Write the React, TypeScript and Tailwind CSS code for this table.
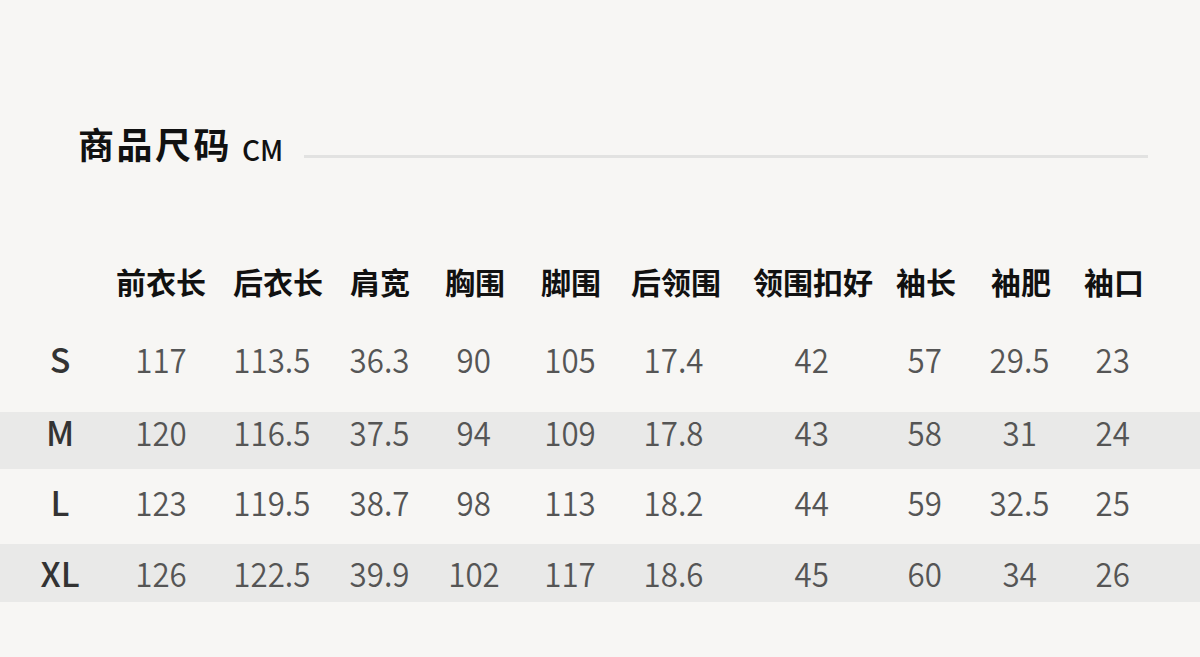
import React from "react";

const font = { fontFamily: '"Noto Sans CJK SC", "Noto Sans", sans-serif' };

const headers = ["前衣长", "后衣长", "肩宽", "胸围", "脚围", "后领围", "领围扣好", "袖长", "袖肥", "袖口"];

const rows: { size: string; vals: string[]; band: boolean; h: string; pt: string }[] = [
  { size: "S", vals: ["117", "113.5", "36.3", "90", "105", "17.4", "42", "57", "29.5", "23"], band: false, h: "h-[78px]", pt: "pt-[5px]" },
  { size: "M", vals: ["120", "116.5", "37.5", "94", "109", "17.8", "43", "58", "31", "24"], band: true, h: "h-[57px]", pt: "pt-0" },
  { size: "L", vals: ["123", "119.5", "38.7", "98", "113", "18.2", "44", "59", "32.5", "25"], band: false, h: "h-[75px]", pt: "pt-[13px]" },
  { size: "XL", vals: ["126", "122.5", "39.9", "102", "117", "18.6", "45", "60", "34", "26"], band: true, h: "h-[58px]", pt: "pt-[9px]" },
];

// widths so that cell centers land at 60,161,278,380,475,571,676,813,926,1021,1114
const widths = ["w-[120px]", "w-[82px]", "w-[152px]", "w-[52px]", "w-[138px]", "w-[54px]", "w-[156px]", "w-[118px]", "w-[108px]", "w-[82px]", "w-[104px]"];
const numShift = ["", "", "pr-[12px]", "", "pr-[2px]", "pr-[2px]", "pr-[4px]", "pr-[2px]", "pr-[2px]", "pr-[2px]", "pr-[2px]"];

export default function App() {
  return (
    <div className="w-[1200px] h-[657px] bg-[#f7f6f4] overflow-hidden" style={font}>
      {/* title */}
      <div className="flex items-start pt-[123px] pl-[78px]">
        <div className="text-[36px] leading-[40px] font-bold text-[#111] tracking-[2.5px]">商品尺码</div>
        <div className="ml-[10px] mt-[6px] text-[28px] leading-[40px] font-medium text-[#111]">CM</div>
        <div className="ml-[21px] mt-[32px] w-[844px] h-[3px] bg-[#e2e2e1]" />
      </div>

      {/* header */}
      <div className="flex mt-[92px] h-[40px]">
        {widths.map((w, i) => (
          <div key={i} className={`${w} shrink-0 flex justify-center whitespace-nowrap`}>
            {i > 0 && (
              <span className="text-[30px] leading-[40px] font-bold text-[#111]">{headers[i - 1]}</span>
            )}
          </div>
        ))}
      </div>

      {/* rows */}
      <div className="flex flex-col mt-[33px]">
        {rows.map((r) => (
          <div key={r.size} className={`flex ${r.h} ${r.pt} ${r.band ? "bg-[#e9e9e8]" : ""}`}>
            {widths.map((w, i) => (
              <div key={i} className={`${w} shrink-0 flex justify-center whitespace-nowrap ${numShift[i]}`}>
                {i === 0 ? (
                  <span className="text-[34px] leading-[40px] font-medium text-[#333]">{r.size}</span>
                ) : (
                  <span className="text-[34px] leading-[40px] font-[350] text-[#555] inline-block scale-x-[0.92]">
                    {r.vals[i - 1]}
                  </span>
                )}
              </div>
            ))}
          </div>
        ))}
      </div>
    </div>
  );
}
